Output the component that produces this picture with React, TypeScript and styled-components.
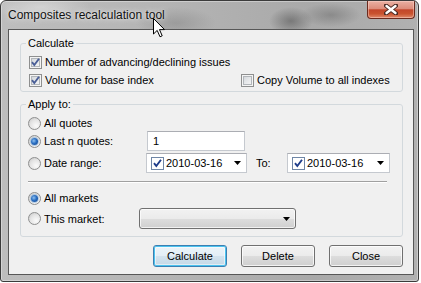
import React from "react";
import styled, { createGlobalStyle, css } from "styled-components";

const GlobalStyle = createGlobalStyle`
  html, body {
    margin: 0;
    padding: 0;
    background: #fff;
  }
  body {
    font-family: "Liberation Sans", Arial, sans-serif;
    font-size: 11px;
    color: #000;
  }
  * {
    box-sizing: border-box;
  }
`;

const Window = styled.div`
  position: relative;
  width: 419px;
  height: 282px;
  display: flex;
  flex-direction: column;
  overflow: hidden;
  border: 1px solid #3b3b3b;
  border-radius: 6px 6px 3px 3px;
  background:
    radial-gradient(ellipse 22px 14px at 290px 20px, rgba(80, 80, 80, 0.55), transparent),
    radial-gradient(ellipse 30px 12px at 330px 14px, rgba(100, 100, 100, 0.45), transparent),
    radial-gradient(ellipse 40px 16px at 175px 22px, rgba(120, 120, 120, 0.4), transparent),
    radial-gradient(ellipse 50px 12px at 40px 6px, rgba(235, 235, 235, 0.5), transparent),
    linear-gradient(90deg, #bdbdbd 0%, #b4b4b4 40%, #a9a9a9 75%, #b1b1b1 100%);
  box-shadow: inset 0 0 0 1px rgba(255, 255, 255, 0.35);
`;

const TitleBar = styled.div`
  position: relative;
  height: 28px;
  display: flex;
  align-items: flex-start;
  flex: none;
`;

const Title = styled.span`
  margin: 7px 0 0 7px;
  font-size: 12px;
  line-height: 14px;
  color: #111;
  text-shadow: 0 0 6px rgba(255, 255, 255, 0.9), 0 0 2px rgba(255, 255, 255, 0.6);
`;

const CloseButton = styled.div`
  margin-left: auto;
  margin-right: 3px;
  width: 48px;
  height: 18px;
  display: flex;
  align-items: center;
  justify-content: center;
  border: 1px solid #6b2a1e;
  border-top: none;
  border-radius: 0 0 4px 4px;
  background: linear-gradient(
    #eab0a3 0%,
    #dd8d7b 45%,
    #c3462b 52%,
    #c9532f 75%,
    #e08a6c 100%
  );
  box-shadow: inset 0 0 0 1px rgba(255, 220, 210, 0.45);
`;

const Cursor = styled.svg`
  position: absolute;
  left: 152px;
  top: 17px;
`;

const Client = styled.div`
  flex: none;
  height: 246px;
  margin: 0 4px 6px 7px;
  padding: 6px 10px 0 11px;
  display: flex;
  flex-direction: column;
  border: 1px solid #575757;
  background: #f0f0f0;
`;

const Group = styled.fieldset<{ $pad: string; $left: number }>`
  margin: 0;
  min-width: 0;
  padding: ${(p) => p.$pad};
  padding-left: ${(p) => p.$left}px;
  border: 1px solid #d3d9dd;
  border-radius: 3px;
  & + & {
    margin-top: 5px;
  }
  & > legend {
    margin-left: ${(p) => 5 - p.$left}px;
  }
`;

const Legend = styled.legend`
  padding: 0 2px;
  font-size: 11px;
  line-height: 14px;
`;

const Row = styled.div<{ $h: number; $top?: number }>`
  display: flex;
  align-items: center;
  height: ${(p) => p.$h}px;
  margin-top: ${(p) => p.$top ?? 0}px;
`;

const Item = styled.label<{ $w?: number }>`
  display: flex;
  align-items: center;
  gap: 3px;
  flex: none;
  width: ${(p) => (p.$w ? `${p.$w}px` : "auto")};
  white-space: nowrap;
`;

const Box = styled.span<{ $flat?: boolean }>`
  width: 13px;
  height: 13px;
  flex: none;
  display: flex;
  align-items: center;
  justify-content: center;
  ${(p) =>
    p.$flat
      ? css`
          border: 1px solid #6f86a6;
          background: #fff;
        `
      : css`
          border: 1px solid #8e8f8f;
          background: linear-gradient(135deg, #cbcfd4 0%, #e6e8ea 50%, #f8f8f8 100%);
          box-shadow: inset 0 0 0 1px #f4f4f4, inset 0 0 0 2px #b2b6ba;
        `}
`;

const Radio = styled.span<{ $on?: boolean }>`
  position: relative;
  width: 13px;
  height: 13px;
  flex: none;
  border-radius: 50%;
  border: 1px solid #8e8f8f;
  background: radial-gradient(circle at 65% 70%, #fbfbfb 0%, #e4e4e4 55%, #c4c4c4 100%);
  ${(p) =>
    p.$on &&
    css`
      &::after {
        content: "";
        position: absolute;
        left: 2px;
        top: 2px;
        width: 7px;
        height: 7px;
        border-radius: 50%;
        background: radial-gradient(circle at 40% 40%, #8ec0f0 0%, #2a6fc2 45%, #0f3f86 100%);
        box-shadow: 0 0 0 1px rgba(120, 170, 220, 0.5);
      }
    `}
`;

const TextInput = styled.div<{ $w: number }>`
  width: ${(p) => p.$w}px;
  height: 20px;
  display: flex;
  align-items: center;
  padding-left: 5px;
  background: #fff;
  border: 1px solid #c5c9cf;
  border-top-color: #abadb3;
`;

const DateField = styled.div<{ $w: number }>`
  width: ${(p) => p.$w}px;
  height: 20px;
  display: flex;
  align-items: center;
  gap: 2px;
  padding: 0 5px 0 4px;
  background: #fff;
  border: 1px solid #c5c9cf;
  border-top-color: #abadb3;
`;

const DateText = styled.span`
  flex: 1;
`;

const ToLabel = styled.span`
  width: 31px;
  margin-left: 9px;
`;

const Separator = styled.div`
  margin: 8px 8px 0 0;
  height: 2px;
  border-top: 1px solid #a0a0a0;
  border-bottom: 1px solid #fff;
`;

const Combo = styled.div`
  width: 157px;
  height: 21px;
  display: flex;
  align-items: center;
  justify-content: flex-end;
  padding-right: 5px;
  border: 1px solid #707070;
  border-radius: 3px;
  background: linear-gradient(#f2f2f2 0%, #ebebeb 50%, #dddddd 51%, #cfcfcf 100%);
  box-shadow: inset 0 0 0 1px rgba(255, 255, 255, 0.7);
`;

const Buttons = styled.div`
  display: flex;
  justify-content: flex-end;
  gap: 14px;
  margin-top: 8px;
`;

const Button = styled.div<{ $default?: boolean }>`
  width: 74px;
  height: 22px;
  display: flex;
  align-items: center;
  justify-content: center;
  border-radius: 3px;
  border: 1px solid #707070;
  background: linear-gradient(#f2f2f2 0%, #ebebeb 50%, #dddddd 51%, #cfcfcf 100%);
  box-shadow: inset 0 0 0 1px rgba(255, 255, 255, 0.75);
  ${(p) =>
    p.$default &&
    css`
      border-color: #3c7fb1;
      background: linear-gradient(#ecf4f9 0%, #e3eef6 50%, #d3e3ee 51%, #c5d8e6 100%);
      box-shadow: inset 0 0 0 1px #4bc3ef, inset 0 0 0 2px rgba(255, 255, 255, 0.5);
    `}
`;

const Arrow = () => (
  <svg width="7" height="4" viewBox="0 0 7 4">
    <polygon points="0,0 7,0 3.5,4" fill="#000" />
  </svg>
);

const Check = ({ flat }: { flat?: boolean }) => (
  <Box $flat={flat}>
    <svg width="11" height="11" viewBox="0 0 11 11">
      <polyline
        points="2,5.2 4.3,8 9,1.8"
        fill="none"
        stroke={flat ? "#1f3d8a" : "#4b5f97"}
        strokeWidth="1.9"
      />
    </svg>
  </Box>
);

const App = () => {
  return (
    <>
      <GlobalStyle />
      <Window>
        <TitleBar>
          <Title>Composites recalculation tool</Title>
          <CloseButton>
            <svg width="14" height="11" viewBox="0 0 14 11">
              <path
                d="M2 1.5 L12 9.5 M12 1.5 L2 9.5"
                stroke="#4a2a24"
                strokeWidth="4.2"
                strokeLinecap="round"
              />
              <path
                d="M2.5 2 L11.5 9 M11.5 2 L2.5 9"
                stroke="#fff"
                strokeWidth="2.4"
                strokeLinecap="round"
              />
            </svg>
          </CloseButton>
          <Cursor width="13" height="20" viewBox="0 0 13 20">
            <path
              d="M0.5 0.5 L0.5 16 L4.2 12.4 L7 18.8 L9.2 17.8 L6.5 11.6 L11.5 11.6 Z"
              fill="#fff"
              stroke="#000"
              strokeWidth="1"
            />
          </Cursor>
        </TitleBar>
        <Client>
          <Group $pad="3px 8px 2px" $left={8}>
            <Legend>Calculate</Legend>
            <Row $h={18}>
              <Item>
                <Check />
                Number of advancing/declining issues
              </Item>
            </Row>
            <Row $h={18}>
              <Item $w={212}>
                <Check />
                Volume for base index
              </Item>
              <Item>
                <Box />
                Copy Volume to all indexes
              </Item>
            </Row>
          </Group>
          <Group $pad="4px 7px 7px" $left={7}>
            <Legend>Apply to:</Legend>
            <Row $h={16}>
              <Item>
                <Radio />
                All quotes
              </Item>
            </Row>
            <Row $h={20}>
              <Item $w={119}>
                <Radio $on />
                Last n quotes:
              </Item>
              <TextInput $w={98}>1</TextInput>
            </Row>
            <Row $h={20} $top={2}>
              <Item $w={118}>
                <Radio />
                Date range:
              </Item>
              <DateField $w={101}>
                <Check flat />
                <DateText>2010-03-16</DateText>
                <Arrow />
              </DateField>
              <ToLabel>To:</ToLabel>
              <DateField $w={103}>
                <Check flat />
                <DateText>2010-03-16</DateText>
                <Arrow />
              </DateField>
            </Row>
            <Separator />
            <Row $h={16} $top={7}>
              <Item>
                <Radio $on />
                All markets
              </Item>
            </Row>
            <Row $h={21} $top={2}>
              <Item $w={111}>
                <Radio />
                This market:
              </Item>
              <Combo>
                <Arrow />
              </Combo>
            </Row>
          </Group>
          <Buttons>
            <Button $default>Calculate</Button>
            <Button>Delete</Button>
            <Button>Close</Button>
          </Buttons>
        </Client>
      </Window>
    </>
  );
};

export default App;
